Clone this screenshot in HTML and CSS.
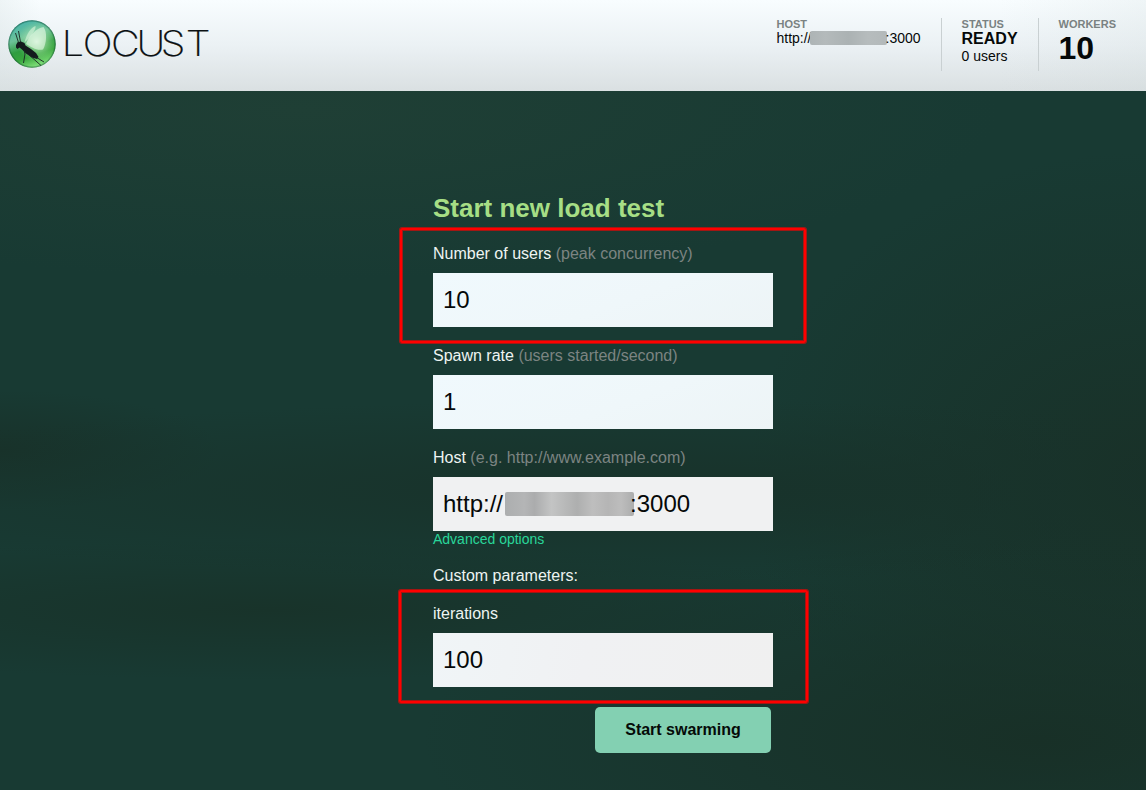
FILE: index.html
```html
<!DOCTYPE html>
<html lang="en">
<head>
<meta charset="utf-8">
<title>Locust</title>
<link rel="stylesheet" href="styles.css">
</head>
<body>
<header class="top-bar">
  <svg class="logo" width="210" height="60" viewBox="0 12 210 60" role="img" aria-label="Locust">
    <defs>
      <linearGradient id="orb" x1="0.25" y1="0" x2="0.6" y2="1">
        <stop offset="0" stop-color="#45b3ac"/><stop offset="0.35" stop-color="#6cc298"/>
        <stop offset="0.58" stop-color="#2f9d40"/><stop offset="0.75" stop-color="#37a53c"/><stop offset="1" stop-color="#8ae882"/>
      </linearGradient>
      <radialGradient id="glow" cx="0.6" cy="0.45" r="0.42">
        <stop offset="0" stop-color="#effff0" stop-opacity="0.85"/><stop offset="1" stop-color="#9bdf9b" stop-opacity="0"/>
      </radialGradient>
      <radialGradient id="rim"><stop offset="0.92" stop-color="#08422d" stop-opacity="0"/><stop offset="1" stop-color="#08422d" stop-opacity="0.6"/></radialGradient>
    </defs>
    <circle cx="32" cy="44" r="23.7" fill="url(#orb)"/>
    <circle cx="32" cy="44" r="23.7" fill="url(#glow)"/>
    <circle cx="32" cy="44" r="23.7" fill="url(#rim)"/>
    <path d="M24.500 42.500C26 35 31 27 35.500 26C36.500 29 31 37 24.500 42.500Z" fill="#c9edd2" opacity="0.75"/>
    <path d="M26 44C29 36 36 28 43.500 27C47.500 32 46.500 44 43 49.500C37 51 31 47 26 44Z" fill="#e0f7e2" opacity="0.65"/>
    <path d="M16 45L17.500 42.200L21 41.500L24.500 43L25.500 45.500L31 49L36 53L38.500 57L37 59L32 57.500L26 53.500L22 49.500L19.500 47.500L17.500 49L16 47.500Z" fill="#141b1d"/>
    <path d="M18.500 42.500L15.500 33M20.500 42L18.500 31M24 50L25 54L23.500 63M28 54L41 65.500M35 56.500L44 62" fill="none" stroke="#182522" stroke-width="0.9"/>
    <text class="wordmark" transform="scale(1.13 1)" x="54.700 73.200 98.300 120.700 142.300 164.300" y="56.500">LOCUST</text>
  </svg>
  <div class="stats">
    <section class="stat stat-host">
      <div class="stat-label">HOST</div>
      <div class="stat-url">http://<span class="redacted redacted-small"></span>:3000</div>
    </section>
    <section class="stat stat-status">
      <div class="stat-label">STATUS</div>
      <div class="state">READY</div>
      <div class="user-count">0 users</div>
    </section>
    <section class="stat stat-workers">
      <div class="stat-label">WORKERS</div>
      <div class="worker-count">10</div>
    </section>
  </div>
</header>
<main class="content">
  <form class="test-form">
    <h2 class="title">Start new load test</h2>
    <div class="group">
      <label class="label" for="users">Number of users <span class="hint">(peak concurrency)</span></label>
      <input class="field" id="users" value="10">
      <span class="highlight highlight-users"></span>
    </div>
    <div class="group">
      <label class="label" for="rate">Spawn rate <span class="hint">(users started/second)</span></label>
      <input class="field" id="rate" value="1">
    </div>
    <div class="group">
      <div class="label">Host <span class="hint">(e.g. http://www.example.com)</span></div>
      <div class="field field-host">http://<span class="redacted redacted-large"></span>:3000</div>
    </div>
    <a class="advanced">Advanced options</a>
    <div class="custom">Custom parameters:</div>
    <div class="group">
      <label class="label" for="iterations">iterations</label>
      <input class="field field-muted" id="iterations" value="100">
      <span class="highlight highlight-iterations"></span>
    </div>
    <button class="submit" type="button">Start swarming</button>
  </form>
</main>
</body>
</html>
```
FILE: styles.css
```css
* { box-sizing: border-box; }
body {
  margin: 0;
  min-height: 790px;
  font-family: "Liberation Sans", Arial, sans-serif;
  font-size: 16px;
  color: #eef4f2;
  background:
    radial-gradient(ellipse 700px 170px at 300px 110px, #1f3f35, rgba(32,62,52,0)),
    radial-gradient(ellipse 900px 90px at 650px 490px, #18322a, rgba(24,50,42,0)),
    radial-gradient(ellipse 600px 70px at 270px 610px, #18332a, rgba(24,51,42,0)),
    radial-gradient(ellipse 620px 200px at 1040px 740px, #183027, rgba(24,48,39,0)),
    radial-gradient(ellipse 400px 330px at 1146px 480px, #193128, rgba(25,49,40,0)),
    radial-gradient(ellipse 220px 60px at 0 450px, #18322a, rgba(24,50,42,0)),
    #183a33;
}
.top-bar {
  height: 91px;
  display: flex;
  justify-content: space-between;
  align-items: flex-start;
  padding: 12px 30px 0 0;
  background:
    linear-gradient(90deg, rgba(215,225,225,.3), rgba(215,225,225,0) 40px, rgba(205,215,215,0) 1000px, rgba(205,215,215,.2)),
    linear-gradient(#f8fdff, #ebf1f4 50%, #dae0e2);
}
.logo { display: block; }
.wordmark { font-family: Inter, Lato, sans-serif; font-weight: 200; font-size: 35px; fill: #0b1012; stroke: #0b1012; stroke-width: 0.2px; }
.stats { display: flex; padding-top: 6px; color: #050808; }
.stat { height: 53px; }
.stat-status { margin-left: 20px; padding: 0 20px; border-left: 1px solid #c9d0d2; border-right: 1px solid #c9d0d2; width: 98px; }
.stat-workers { padding-left: 20px; }
.stat-label { font-size: 11px; line-height: 13px; font-weight: bold; color: #7a8282; }
.stat-url { font-size: 14px; line-height: 15px; white-space: nowrap; }
.state { font-weight: bold; font-size: 16px; line-height: 16px; }
.user-count { font-size: 14px; line-height: 18px; }
.worker-count { font-size: 32px; line-height: 35px; font-weight: bold; }
.redacted { display: inline-block; border-radius: 2px; }
.redacted-small { width: 77px; height: 14px; margin: 0 -1px -2px -2px; vertical-align: baseline; background: linear-gradient(90deg, #adb4b5, #b4babb 20%, #abb2b3 50%, #b6bcbd 75%, #b3b9ba); }
.redacted-large { width: 129px; height: 24px; margin: 0 -3.500px 0 1.500px; background: linear-gradient(90deg, #acaeaf, #b4b5b6 15%, #abacad 23%, #c3c4c4 36%, #aeafaf 56%, #bebebe 68%, #b5b5b5 80%, #bdbdbd 90%, #acadad); }
.content { display: flex; justify-content: center; padding: 103px 0 0 60px; }
.test-form { width: 340px; display: flex; flex-direction: column; }
.title { margin: 0 0 23px; font-size: 26px; line-height: 28px; color: #a6de85; white-space: nowrap; }
.group { position: relative; display: flex; flex-direction: column; gap: 10px; margin-bottom: 20px; }
.label { line-height: 18px; }
.hint { color: #7c8482; }
.field {
  width: 340px; height: 54px; padding: 0 10px; border: 0; border-radius: 0; outline: 0;
  font: 24px/54px "Liberation Sans", Arial, sans-serif;
  color: #050808;
  background: linear-gradient(160deg, #f0f9fd, #eff7fa 55%, #edf4f6);
}
.field-host { display: flex; align-items: center; background: #f0f1f2; }
.field-muted { background: linear-gradient(100deg, #f0f5f7, #f0f1f3 45%, #f0f0f0); }
.advanced { margin-top: -20px; font-size: 14px; line-height: 16px; color: #29d69a; }
.custom { margin: 20px 0; line-height: 18px; }
.submit {
  align-self: flex-end; margin: 0 2px 0 0; width: 176px; height: 46px; padding: 0;
  border: 0; border-radius: 5px; background: #83d0b2; color: #050a08;
  font: bold 16px "Liberation Sans", Arial, sans-serif;
}
.highlight { position: absolute; border: 2px solid #ff0000; border-radius: 2px; box-shadow: 0 0 0 1px rgba(255,0,0,.6), inset 0 0 0 1px rgba(255,0,0,.6); pointer-events: none; }
.highlight-users { left: -33px; top: -17px; width: 406px; height: 115px; }
.highlight-iterations { left: -34px; top: -15px; width: 409px; height: 113px; }
```
